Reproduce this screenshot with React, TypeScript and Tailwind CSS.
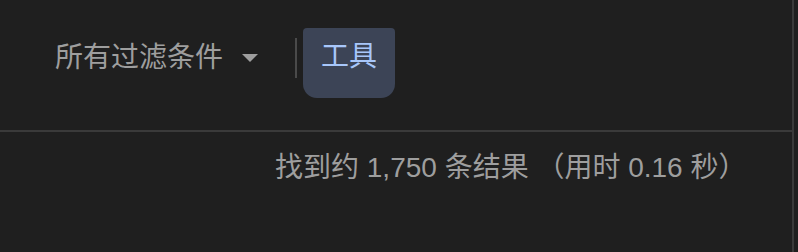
export default function App() {
  return (
    <div
      className="flex h-[252px] w-[798px] bg-[#1f1f1f]"
      style={{ fontFamily: '"Liberation Sans", "Noto Sans CJK SC", sans-serif' }}
    >
      <div className="flex w-[792px] flex-col">
        <div className="flex h-[130px] items-start">
          <div className="mt-[38px] flex h-[40px] items-center pl-[55px]">
            <span className="text-[28px] leading-[28px] text-[#9e9e9e]">所有过滤条件</span>
            <svg className="ml-[19px]" width="16" height="8" viewBox="0 0 16 8">
              <path d="M0 0 L16 0 L8 8 Z" fill="#9e9e9e" />
            </svg>
            <div className="ml-[37px] h-[40px] w-[2px] bg-[#4a4a4a]" />
          </div>
          <div className="ml-[6px] mt-[28px] h-[70px] rounded-t-[4px] rounded-b-[14px] bg-[#3c4456] px-[18px] pt-[15px]">
            <span className="block text-[28px] leading-[28px] text-[#a8c7fa]">工具</span>
          </div>
        </div>
        <div className="h-[2px] bg-[#3a3a3a]" />
        <div className="pl-[275px] pt-[22px]">
          <span className="text-[28px] leading-[28px] text-[#9e9e9e]">
            找到约 1,750 条结果 （用时 0.16 秒）
          </span>
        </div>
      </div>
      <div className="h-full w-[2px] bg-[#3a3a3a]" />
    </div>
  );
}
